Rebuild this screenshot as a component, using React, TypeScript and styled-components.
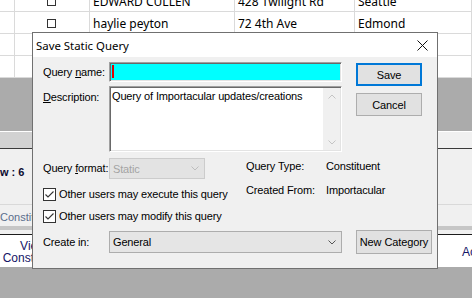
import styled, { createGlobalStyle } from "styled-components";

const GlobalStyle = createGlobalStyle`
  html, body {
    margin: 0;
    padding: 0;
  }
  body {
    width: 472px;
    height: 298px;
    overflow: hidden;
    font-family: "Liberation Sans", Arial, sans-serif;
    background: #ababab;
  }
`;

interface Person {
  id: string;
  name: string;
  address: string;
  city: string;
}

const people: Person[] = [
  { id: "1", name: "EDWARD CULLEN", address: "428 Twilight Rd", city: "Seattle" },
  { id: "2", name: "haylie peyton", address: "72 4th Ave", city: "Edmond" },
  { id: "3", name: "", address: "", city: "" },
  { id: "4", name: "", address: "", city: "" },
];

/* ---------- background window ---------- */

const Desktop = styled.div`
  position: relative;
  width: 472px;
  height: 298px;
  overflow: hidden;
  display: flex;
  flex-direction: column;
`;

const Grid = styled.div`
  height: 78px;
  overflow: hidden;
  background: #fff;
  flex-shrink: 0;
`;

const GridBody = styled.div`
  margin-top: -10px;
`;

const GridRow = styled.div`
  display: grid;
  grid-template-columns: 15px 75px 145px 120px 1fr;
  height: 22px;
`;

const Cell = styled.div<{ $center?: boolean }>`
  box-sizing: border-box;
  border-right: 1px solid #dadada;
  border-bottom: 1px solid #dadada;
  padding: 2px 0 0 3px;
  display: flex;
  align-items: center;
  justify-content: ${(p) => (p.$center ? "center" : "flex-start")};
  font-family: "Noto Sans", sans-serif;
  font-size: 12px;
  color: #000;
  white-space: nowrap;
  overflow: hidden;
`;

const RowBox = styled.span`
  width: 7px;
  height: 7px;
  border: 1px solid #333;
  background: #fff;
  margin: -1px 0 0 -4px;
`;

const EmptyArea = styled.div`
  height: 53px;
  background: #ababab;
  flex-shrink: 0;
`;

const HScroll = styled.div`
  height: 16px;
  border-top: 1px solid #fff;
  background: #f0f0f0;
  display: flex;
  flex-shrink: 0;
`;

const Thumb = styled.div`
  width: 300px;
  background: #d2d2d2;
`;

const StatusPanel = styled.div`
  height: 56px;
  border-top: 1px solid #3a3a3a;
  background: #f0f0f0;
  padding-top: 13px;
  box-sizing: border-box;
  flex-shrink: 0;
`;

const Count = styled.span`
  font-weight: bold;
  font-size: 11px;
  color: #0a0a30;
  white-space: nowrap;
`;

const TabStrip = styled.div`
  height: 21px;
  border-top: 1px solid #d9d9d9;
  background: #f0f0f0;
  display: flex;
  align-items: center;
  flex-shrink: 0;
`;

/* the part of the window that the dialog does not cover */
const Peek = styled.div<{ $width: number }>`
  width: ${(p) => p.$width}px;
  overflow: hidden;
  flex-shrink: 0;
`;

const TabLabel = styled.span`
  font-size: 11px;
  color: #5a6e8c;
  white-space: nowrap;
`;

const TabEdge = styled.div`
  height: 4px;
  background: #c6c6c6;
  border-bottom: 4px solid #f0f0f0;
  flex-shrink: 0;
`;

const ActionPanel = styled.div`
  height: 32px;
  border-top: 1px solid #1c1c1c;
  background: #fff;
  display: flex;
  align-items: center;
  flex-shrink: 0;
`;

const ActionCell = styled.div<{ $width: number }>`
  width: ${(p) => p.$width}px;
  font-size: 12px;
  line-height: 12px;
  color: #141466;
  text-align: center;
  white-space: nowrap;
  margin-top: 1px;
`;

const Spacer = styled.div`
  flex: 1;
`;

/* ---------- dialog ---------- */

const Dialog = styled.div`
  position: absolute;
  left: 32px;
  top: 32px;
  width: 406px;
  height: 237px;
  box-sizing: border-box;
  border: 1px solid #707070;
  background: #f0f0f0;
  display: flex;
  flex-direction: column;
`;

const TitleBar = styled.div`
  height: 24px;
  background: #fff;
  display: flex;
  align-items: center;
  padding: 0 9px 0 3px;
  flex-shrink: 0;
`;

const Title = styled.span`
  flex: 1;
  font-family: "Noto Sans", sans-serif;
  font-size: 11.4px;
  color: #000;
  margin-top: 1px;
`;

const Body = styled.div`
  padding: 5px 0 0 10px;
  font-size: 11px;
  color: #000;
`;

const Top = styled.div`
  display: flex;
`;

const Fields = styled.div`
  display: flex;
  flex-direction: column;
  gap: 4px;
`;

const FieldRow = styled.div`
  display: flex;
  align-items: flex-start;
`;

const Label = styled.label<{ $pad?: number }>`
  width: 66px;
  padding-top: ${(p) => p.$pad ?? 0}px;
  line-height: 13px;
  white-space: nowrap;
  letter-spacing: -0.15px;
  flex-shrink: 0;
`;

const Sunken = styled.div<{ $fill: string; $height: number }>`
  position: relative;
  box-sizing: border-box;
  width: 233px;
  height: ${(p) => p.$height}px;
  background: ${(p) => p.$fill};
  border: 1px solid;
  border-color: #a0a0a0 #fff #fff #a0a0a0;
  box-shadow: inset 1px 1px #696969, inset -1px -1px #e3e3e3;
  display: flex;
`;

const Caret = styled.span`
  width: 2px;
  height: 13px;
  margin: 2px 0 0 2px;
  background: #e00000;
`;

const TextBody = styled.div`
  flex: 1;
  padding: 3px 0 0 2px;
  line-height: 13px;
  letter-spacing: -0.15px;
  white-space: nowrap;
`;

const VScroll = styled.div`
  width: 17px;
  margin: 1px 1px 1px 0;
  background: #f0f0f0;
  display: flex;
  flex-direction: column;
  justify-content: space-between;
  align-items: center;
  padding: 6px 0 5px;
  box-sizing: border-box;
`;

const Buttons = styled.div`
  display: flex;
  flex-direction: column;
  gap: 7px;
  margin-left: 14px;
  padding-top: 1px;
`;

const Button = styled.button<{ $default?: boolean; $width: number; $height: number }>`
  width: ${(p) => p.$width}px;
  height: ${(p) => p.$height}px;
  box-sizing: border-box;
  padding: 0;
  background: #e1e1e1;
  border: ${(p) => (p.$default ? "2px solid #0078d7" : "1px solid #adadad")};
  font-family: "Liberation Sans", Arial, sans-serif;
  font-size: 11px;
  letter-spacing: -0.1px;
  color: #000;
  flex-shrink: 0;
`;

const Middle = styled.div`
  display: flex;
  margin-top: 6px;
`;

const LeftCol = styled.div`
  width: 203px;
  display: flex;
  flex-direction: column;
`;

const InlineRow = styled.div`
  display: flex;
  align-items: center;
`;

const Combo = styled.div<{ $disabled?: boolean; $width: number; $height: number }>`
  width: ${(p) => p.$width}px;
  height: ${(p) => p.$height}px;
  box-sizing: border-box;
  border: 1px solid ${(p) => (p.$disabled ? "#cccccc" : "#adadad")};
  background: ${(p) => (p.$disabled ? "#e3e3e3" : "#e5e5e5")};
  color: ${(p) => (p.$disabled ? "#a3a3a3" : "#000")};
  display: flex;
  align-items: center;
  justify-content: space-between;
  padding: 0 5px 0 3px;
  letter-spacing: -0.15px;
`;

const CheckRow = styled.label`
  display: flex;
  align-items: center;
  height: 14px;
  margin-top: 8px;
  white-space: nowrap;
  letter-spacing: -0.15px;
`;

const Box = styled.span`
  width: 13px;
  height: 13px;
  box-sizing: border-box;
  border: 1px solid #333;
  background: #fff;
  margin-right: 3px;
  display: flex;
`;

const Info = styled.div`
  display: grid;
  grid-template-columns: 80px auto;
  row-gap: 11px;
  margin-top: 2px;
  line-height: 13px;
  letter-spacing: -0.15px;
  align-content: start;
`;

const Bottom = styled.div`
  display: flex;
  align-items: center;
  margin-top: 7px;
  gap: 0 14px;
`;

const ComboField = styled.div`
  display: flex;
  align-items: center;
`;

const Chevron = ({ color, up }: { color: string; up?: boolean }) => (
  <svg width="8" height="5" viewBox="0 0 8 5">
    <polyline
      points={up ? "0.5,4.5 4,1 7.5,4.5" : "0.5,0.5 4,4 7.5,0.5"}
      fill="none"
      stroke={color}
      strokeWidth="1"
    />
  </svg>
);

const Check = () => (
  <svg width="11" height="11" viewBox="0 0 11 11">
    <polyline points="1.5,5.5 4,8 9.5,2.5" fill="none" stroke="#333" strokeWidth="1.1" />
  </svg>
);

const CloseIcon = () => (
  <svg width="11" height="11" viewBox="0 0 11 11">
    <path d="M0.5 0.5 L10.5 10.5 M10.5 0.5 L0.5 10.5" stroke="#111" strokeWidth="1" />
  </svg>
);

const SaveQueryDialog = () => (
  <Dialog role="dialog" aria-label="Save Static Query">
    <TitleBar>
      <Title>Save Static Query</Title>
      <CloseIcon />
    </TitleBar>
    <Body>
      <Top>
        <Fields>
          <FieldRow>
            <Label $pad={4}>
              Query <u>n</u>ame:
            </Label>
            <Sunken $fill="#00ffff" $height={20}>
              <Caret />
            </Sunken>
          </FieldRow>
          <FieldRow>
            <Label $pad={5}>
              <u>D</u>escription:
            </Label>
            <Sunken $fill="#fff" $height={66}>
              <TextBody>Query of Importacular updates/creations</TextBody>
              <VScroll>
                <Chevron color="#c4c4c4" up />
                <Chevron color="#c4c4c4" />
              </VScroll>
            </Sunken>
          </FieldRow>
        </Fields>
        <Buttons>
          <Button $default $width={66} $height={23}>
            Save
          </Button>
          <Button $width={66} $height={23}>
            Cancel
          </Button>
        </Buttons>
      </Top>

      <Middle>
        <LeftCol>
          <InlineRow>
            <Label>
              Query <u>f</u>ormat:
            </Label>
            <Combo $disabled $width={96} $height={21}>
              <span>Static</span>
              <Chevron color="#bdbdbd" />
            </Combo>
          </InlineRow>
          <CheckRow>
            <Box>
              <Check />
            </Box>
            Other users may execute this query
          </CheckRow>
          <CheckRow>
            <Box>
              <Check />
            </Box>
            Other users may modify this query
          </CheckRow>
        </LeftCol>
        <Info>
          <span>Query Type:</span>
          <span>Constituent</span>
          <span>Created From:</span>
          <span>Importacular</span>
        </Info>
      </Middle>

      <Bottom>
        <ComboField>
          <Label>Create in:</Label>
          <Combo $width={233} $height={22}>
            <span>General</span>
            <Chevron color="#555" />
          </Combo>
        </ComboField>
        <Button $width={76} $height={24}>
          New Category
        </Button>
      </Bottom>
    </Body>
  </Dialog>
);

export default function App() {
  return (
    <>
      <GlobalStyle />
      <Desktop>
        <Grid>
          <GridBody>
            {people.map((p) => (
              <GridRow key={p.id}>
                <Cell />
                <Cell $center>{p.name && <RowBox />}</Cell>
                <Cell>{p.name}</Cell>
                <Cell>{p.address}</Cell>
                <Cell>{p.city}</Cell>
              </GridRow>
            ))}
          </GridBody>
        </Grid>
        <EmptyArea />
        <HScroll>
          <Thumb />
        </HScroll>
        <StatusPanel>
          <Count>w : 6</Count>
        </StatusPanel>
        <TabStrip>
          <Peek $width={32}>
            <TabLabel>Constituent</TabLabel>
          </Peek>
        </TabStrip>
        <TabEdge />
        <ActionPanel>
          <Peek $width={32}>
            <ActionCell $width={66}>
              View
              <br />
              Constituent
            </ActionCell>
          </Peek>
          <Spacer />
          <ActionCell $width={10} style={{ textAlign: "left" }}>
            Actions
          </ActionCell>
        </ActionPanel>
        <EmptyArea />
        <SaveQueryDialog />
      </Desktop>
    </>
  );
}
